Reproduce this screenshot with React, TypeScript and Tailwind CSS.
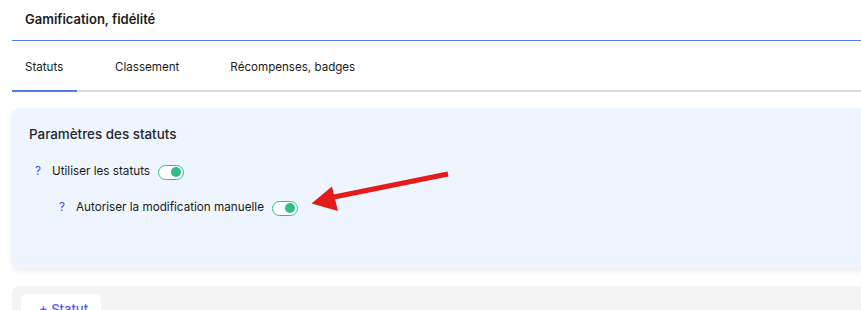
import React from 'react';

function Toggle() {
  return (
    <span className="inline-flex h-[15px] w-[26px] items-center justify-end rounded-full border border-[#2fbf86] bg-white px-[2px]">
      <span className="h-[10px] w-[10px] rounded-full bg-[#2fbf86]" />
    </span>
  );
}

function Arrow() {
  return (
    <svg className="absolute left-[300px] top-[165px]" width="152" height="50" viewBox="0 0 152 50">
      <line x1="148" y1="9" x2="34" y2="32" stroke="#e31b1b" strokeWidth="5" />
      <polygon points="11.5,38.5 32,21.5 38,46" fill="#e31b1b" />
    </svg>
  );
}

export default function App() {
  const tabs = ['Statuts', 'Classement', 'Récompenses, badges'];
  return (
    <div className="relative h-[310px] w-[861px] overflow-hidden bg-white pl-3 font-['Inter',sans-serif] text-[#1c1c1c]">
      <div className="flex h-[40px] items-center pl-[13px] text-[13px] font-semibold">Gamification, fidélité</div>
      <div className="h-px bg-[#4f7df2]" />
      <div className="flex h-[51px] items-stretch border-b-2 border-[#dedede] pt-[4px] text-[11.6px]">
        <div className="-mb-[2px] flex w-[65px] items-center border-b-2 border-[#4d7cf0] pl-[13px]">{tabs[0]}</div>
        <div className="flex items-center pl-[38px]">{tabs[1]}</div>
        <div className="flex items-center pl-[51px]">{tabs[2]}</div>
      </div>
      <div className="mt-[16px] h-[160px] rounded-l-lg bg-[#eff5fe] pt-[16px] pl-[17px] shadow-[0_3px_6px_rgba(0,0,0,0.08)]">
        <div className="text-[13.4px] leading-[20px] font-medium text-[#26262e]">Paramètres des statuts</div>
        <div className="mt-[18px] flex h-[20px] items-center gap-[8px] pl-[6px] text-[11.7px]">
          <span className="w-[9px] text-[#4a4ae8]">?</span>
          <span>Utiliser les statuts</span>
          <Toggle />
        </div>
        <div className="mt-[16px] flex h-[20px] items-center gap-[8px] pl-[30px] text-[11.7px]">
          <span className="w-[9px] text-[#4a4ae8]">?</span>
          <span>Autoriser la modification manuelle</span>
          <Toggle />
        </div>
      </div>
      <div className="mt-[18px] h-[40px] rounded-tl-lg bg-[#f4f4f4] pl-[9px] pt-[8px]">
        <div className="h-[40px] w-[80px] rounded-md bg-white pl-[18px] pt-[6px] text-[13px] font-medium text-[#5858ee]">+ Statut</div>
      </div>
      <Arrow />
    </div>
  );
}
